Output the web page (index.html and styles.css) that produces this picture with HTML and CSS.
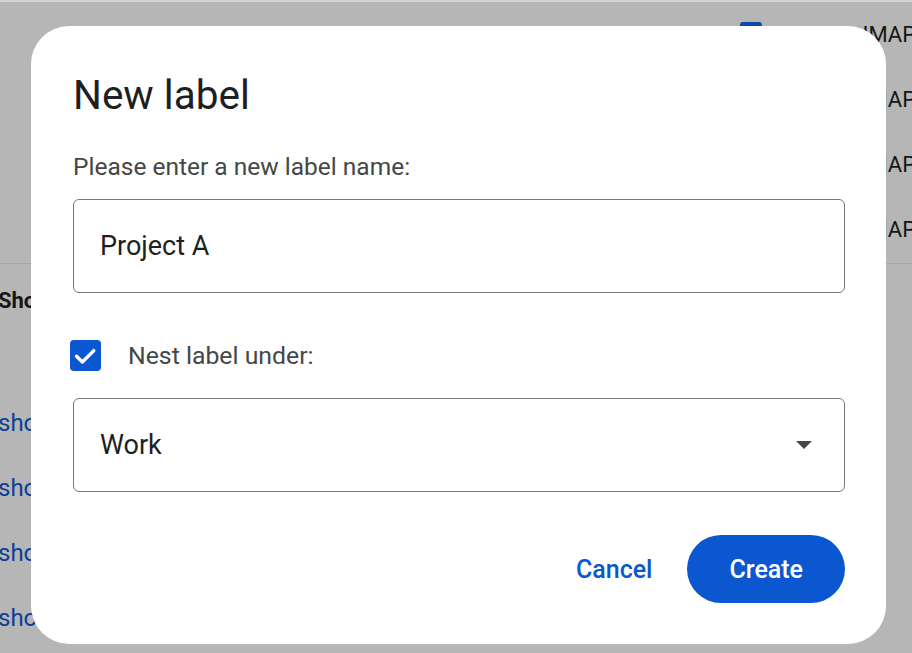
FILE: index.html
```html
<!DOCTYPE html>
<html lang="en">
<head>
<meta charset="utf-8">
<title>New label</title>
<link rel="stylesheet" href="styles.css">
</head>
<body>
<div class="page">
  <div class="topstrip"></div>
  <div class="settings">
    <div class="setting-row"><span class="bg-check"></span><span class="bg-text">Enable IMAP</span></div>
    <div class="setting-row"><span class="bg-check"></span><span class="bg-text">Enable IMAP</span></div>
    <div class="setting-row"><span class="bg-check"></span><span class="bg-text">Enable IMAP</span></div>
    <div class="setting-row"><span class="bg-check"></span><span class="bg-text">Enable IMAP</span></div>
  </div>
  <div class="divider"></div>
  <div class="labels-section">
    <div class="section-head">Show in label list</div>
    <div class="link-list">
      <a class="bg-link">show</a>
      <a class="bg-link">show</a>
      <a class="bg-link">show</a>
      <a class="bg-link">show</a>
    </div>
  </div>
</div>

<div class="dialog" role="dialog" aria-labelledby="dlg-title">
  <h1 class="dialog-title" id="dlg-title">New label</h1>
  <label class="field-label" for="label-name">Please enter a new label name:</label>
  <div class="text-field"><span class="field-value" id="label-name">Project A</span></div>
  <div class="nest-row">
    <span class="checkbox">
      <svg width="31" height="31" viewBox="0 0 31 31"><path d="M6.5 16.3 L12.4 22 L23.8 10.6" fill="none" stroke="#fff" stroke-width="3.4" stroke-linecap="round" stroke-linejoin="round"/></svg>
    </span>
    <span class="nest-label">Nest label under:</span>
  </div>
  <div class="select-field">
    <span class="field-value">Work</span>
    <span class="select-arrow"></span>
  </div>
  <div class="actions">
    <button class="btn-text">Cancel</button>
    <button class="btn-filled">Create</button>
  </div>
</div>
</body>
</html>
```
FILE: styles.css
```css
html, body {
  margin: 0;
  padding: 0;
}
body {
  width: 912px;
  height: 653px;
  overflow: hidden;
  background: #b6b6b6;
  font-family: Roboto, "Liberation Sans", Arial, sans-serif;
  position: relative;
}
.page {
  display: flex;
  flex-direction: column;
}
.topstrip {
  height: 2px;
  background: #d2d2d2;
}
.settings {
  display: flex;
  flex-direction: column;
}
.setting-row {
  height: 65px;
  display: flex;
  align-items: center;
  padding-left: 740px;
  white-space: nowrap;
}
.bg-check {
  width: 22px;
  height: 22px;
  border-radius: 3px;
  background: #0b4aa6;
  flex: none;
  margin-top: -4px;
}
.bg-text {
  margin-left: 29px;
  font-size: 22px;
  color: #161616;
}
.divider {
  margin-top: 1px;
  height: 1px;
  background: #a5a5a5;
}
.labels-section {
  margin-left: -2px;
  display: flex;
  flex-direction: column;
}
.section-head {
  margin-top: 21px;
  height: 32px;
  line-height: 32px;
  font-size: 22px;
  font-weight: 700;
  color: #161616;
  white-space: nowrap;
}
.link-list {
  margin-top: 74px;
  display: flex;
  flex-direction: column;
}
.bg-link {
  height: 65px;
  line-height: 65px;
  font-size: 24px;
  color: #0c3f98;
}

.dialog {
  position: absolute;
  left: 31px;
  top: 26px;
  width: 855px;
  height: 618px;
  box-sizing: border-box;
  padding: 45px 41px 0 42px;
  background: #fff;
  border-radius: 38px;
  display: flex;
  flex-direction: column;
}
.dialog-title {
  margin: 0;
  font-size: 40.5px;
  line-height: 49px;
  font-weight: 400;
  color: #1f1f1f;
}
.field-label {
  margin-top: 31px;
  font-size: 24.5px;
  line-height: 32px;
  color: #444746;
}
.text-field, .select-field {
  height: 94px;
  box-sizing: border-box;
  border: 1.5px solid #777977;
  border-radius: 6px;
  display: flex;
  align-items: center;
  padding-left: 26px;
}
.text-field {
  margin-top: 16px;
}
.field-value {
  font-size: 27px;
  color: #1f1f1f;
}
.nest-row {
  margin-top: 47px;
  height: 31px;
  display: flex;
  align-items: center;
  margin-left: -3px;
}
.checkbox {
  width: 31px;
  height: 31px;
  border-radius: 4px;
  background: #0b57d0;
  display: flex;
}
.nest-label {
  margin-left: 27px;
  font-size: 24.8px;
  color: #444746;
}
.select-field {
  margin-top: 27px;
  justify-content: space-between;
  padding-right: 32px;
}
.select-arrow {
  width: 0;
  height: 0;
  border-left: 8.5px solid transparent;
  border-right: 8.5px solid transparent;
  border-top: 8.5px solid #444746;
}
.actions {
  margin-top: 43px;
  display: flex;
  justify-content: flex-end;
  align-items: center;
  gap: 19px;
}
button {
  font-family: inherit;
  border: none;
  cursor: pointer;
}
.btn-text {
  background: none;
  color: #0b57d0;
  font-size: 25px;
  font-weight: 500;
  height: 68px;
  padding: 0 16px;
}
.btn-filled {
  background: #0b57d0;
  color: #fff;
  font-size: 25px;
  font-weight: 500;
  height: 68px;
  padding: 0 42px;
  border-radius: 34px;
}
```
